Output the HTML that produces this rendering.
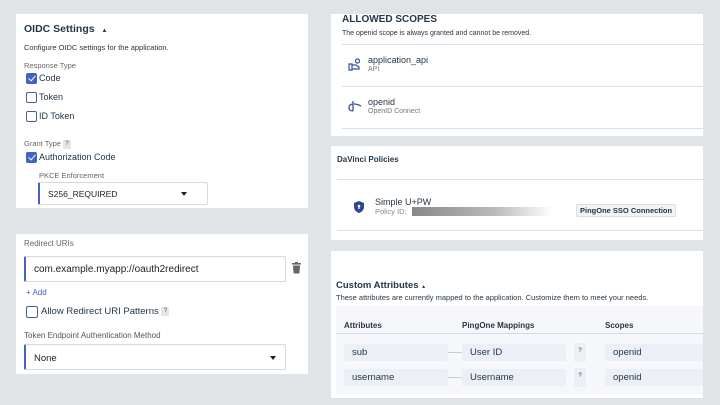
<!DOCTYPE html>
<html><head><style>
*{box-sizing:border-box;margin:0;padding:0}
body{width:720px;height:405px;background:#e1e4e7;font-family:"Liberation Sans",sans-serif;color:#253746;position:relative;overflow:hidden}
.card{position:absolute;background:#fff}
.abs{position:absolute;white-space:nowrap}
.cb{position:absolute;width:11px;height:11px;border:1.5px solid #4a5b9f;border-radius:2px;background:#fff}
.cb.on{background:#4462c4;border-color:#4462c4}
.cb.on:after{content:"";position:absolute;left:2.5px;top:0px;width:3px;height:6px;border:solid #fff;border-width:0 1.6px 1.6px 0;transform:rotate(40deg)}
.q{display:inline-block;width:8px;height:9px;background:#e3e5e8;font-size:6px;text-align:center;line-height:9px;color:#555;border-radius:1px;vertical-align:middle}
.sel{position:absolute;border:1px solid #d5d8dc;border-left:2px solid #4462c4;border-radius:2px;background:#fff}
.caret{position:absolute;width:0;height:0;border-left:3.5px solid transparent;border-right:3.5px solid transparent;border-top:4px solid #222}
.hr{position:absolute;height:1px;background:#dcdfe3}
.pill{position:absolute;background:#eceff6;border-radius:2px;font-size:9.5px;padding-left:8px;line-height:17px;color:#253746}
</style></head><body>
<!-- card 1 -->
<div class="card" style="left:16px;top:14px;width:292px;height:194px">
<div class="abs" style="left:8px;top:9px;font-size:10.5px;font-weight:bold">OIDC Settings <span style="font-size:6px;margin-left:4px">▲</span></div>
<div class="abs" style="left:8px;top:29px;font-size:7.5px">Configure OIDC settings for the application.</div>
<div class="abs" style="left:8px;top:47px;font-size:7.5px;color:#666">Response Type</div>
<div class="cb on" style="left:10px;top:59px"></div><div class="abs" style="left:23px;top:59px;font-size:9px">Code</div>
<div class="cb" style="left:10px;top:78px"></div><div class="abs" style="left:23px;top:78px;font-size:9px">Token</div>
<div class="cb" style="left:10px;top:97px"></div><div class="abs" style="left:23px;top:97px;font-size:9px">ID Token</div>
<div class="abs" style="left:8px;top:125px;font-size:7.5px;color:#666">Grant Type <span class="q">?</span></div>
<div class="cb on" style="left:10px;top:138px"></div><div class="abs" style="left:23px;top:138px;font-size:9px">Authorization Code</div>
<div class="abs" style="left:23px;top:157px;font-size:7.5px;color:#666">PKCE Enforcement</div>
<div class="sel" style="left:22px;top:168px;width:170px;height:23px"><div class="abs" style="left:8px;top:6px;font-size:8.5px;color:#222">S256_REQUIRED</div><div class="caret" style="left:141px;top:9px"></div></div>
</div>
<!-- card 2 -->
<div class="card" style="left:16px;top:234px;width:292px;height:140px">
<div class="abs" style="left:8px;top:5px;font-size:8px;color:#666">Redirect URIs</div>
<div class="sel" style="left:8px;top:22px;width:262px;height:26px"><div class="abs" style="left:8px;top:7px;font-size:10px;color:#222">com.example.myapp://oauth2redirect</div></div>
<svg class="abs" style="left:276px;top:28px" width="9" height="12" viewBox="0 0 9 12"><rect x="0" y="1" width="9" height="1.6" fill="#666"/><rect x="3" y="0" width="3" height="1.5" fill="#666"/><path d="M1 3.5h7l-.6 8H1.6z" fill="#666"/></svg>
<div class="abs" style="left:10px;top:54px;font-size:8px;color:#4462c4">+ Add</div>
<div class="cb" style="left:10px;top:72px;width:12px;height:12px"></div><div class="abs" style="left:25px;top:72px;font-size:9.5px">Allow Redirect URI Patterns <span class="q">?</span></div>
<div class="abs" style="left:8px;top:97px;font-size:8px;color:#555">Token Endpoint Authentication Method</div>
<div class="sel" style="left:8px;top:110px;width:262px;height:26px"><div class="abs" style="left:8px;top:8px;font-size:9.5px;color:#222">None</div><div class="caret" style="left:244px;top:11px"></div></div>
</div>
<!-- right card 1 -->
<div class="card" style="left:331px;top:14px;width:372px;height:122px">
<div class="abs" style="left:11px;top:0px;font-size:10px;font-weight:bold">ALLOWED SCOPES</div>
<div class="abs" style="left:11px;top:16px;font-size:7px">The openid scope is always granted and cannot be removed.</div>
<div class="hr" style="left:11px;top:30px;width:361px"></div>
<svg class="abs" style="left:17px;top:44px" width="14" height="14" viewBox="0 0 14 14" fill="none" stroke="#3a4d9a" stroke-width="1.2"><circle cx="9.5" cy="3" r="2"/><path d="M1 6h3v6H1zM4 7h4l3 2v2H4"/></svg>
<div class="abs" style="left:37px;top:41px;font-size:9px;color:#253746">application_api</div>
<div class="abs" style="left:37px;top:52px;font-size:7px;color:#777">API</div>
<div class="hr" style="left:11px;top:72px;width:361px"></div>
<svg class="abs" style="left:17px;top:86px" width="14" height="12" viewBox="0 0 14 12" fill="none" stroke="#3a4d9a" stroke-width="1.3"><path d="M5 1v10M5 4C2 4 1 6 1 8s2 3 4 3M6 4c3 0 5 1 7 2"/></svg>
<div class="abs" style="left:37px;top:83px;font-size:9px;color:#253746">openid</div>
<div class="abs" style="left:37px;top:94px;font-size:7px;color:#777">OpenID Connect</div>
<div class="hr" style="left:11px;top:114px;width:361px"></div>
</div>
<!-- right card 2 -->
<div class="card" style="left:331px;top:146px;width:372px;height:94px">
<div class="abs" style="left:6px;top:9px;font-size:8px;font-weight:bold">DaVinci Policies</div>
<div class="hr" style="left:6px;top:33px;width:366px"></div>
<svg class="abs" style="left:23px;top:55px" width="10" height="12" viewBox="0 0 10 12"><path d="M5 0L10 2v4c0 3-2.5 5-5 6C2.5 11 0 9 0 6V2z" fill="#2e4596"/><circle cx="5" cy="5" r="1.3" fill="#fff"/><rect x="4.4" y="5" width="1.2" height="3" fill="#fff"/></svg>
<div class="abs" style="left:44px;top:51px;font-size:9px">Simple U+PW</div>
<div class="abs" style="left:44px;top:61px;font-size:7.5px;color:#888">Policy ID:</div>
<div class="abs" style="left:81px;top:61px;width:140px;height:9px;background:linear-gradient(90deg,#888,#bbb 60%,#fff)"></div>
<div class="abs" style="left:245px;top:58px;font-size:7.5px;font-weight:bold;background:#f2f3f4;border:1px solid #ddd;border-radius:2px;padding:1px 3px">PingOne SSO Connection</div>
<div class="hr" style="left:6px;top:84px;width:366px"></div>
</div>
<!-- right card 3 -->
<div class="card" style="left:331px;top:251px;width:372px;height:147px">
<div class="abs" style="left:5px;top:29px;font-size:9.5px;font-weight:bold">Custom Attributes <span style="font-size:5px">▲</span></div>
<div class="abs" style="left:5px;top:42px;font-size:7.5px">These attributes are currently mapped to the application. Customize them to meet your needs.</div>
<div class="abs" style="left:5px;top:55px;width:367px;height:88px;background:#f6f7fa"></div>
<div class="abs" style="left:13px;top:70px;font-size:8px;font-weight:bold">Attributes</div>
<div class="abs" style="left:131px;top:70px;font-size:8px;font-weight:bold">PingOne Mappings</div>
<div class="abs" style="left:274px;top:70px;font-size:8px;font-weight:bold">Scopes</div>
<div class="hr" style="left:5px;top:82px;width:367px;background:#d7dae0"></div>
<div class="pill" style="left:13px;top:93px;width:104px">sub</div>
<div class="abs" style="left:117px;top:101px;width:14px;height:1px;background:#ccc"></div>
<div class="pill" style="left:131px;top:93px;width:104px">User ID</div>
<div class="pill" style="left:243px;top:92px;width:12px;height:19px;padding:0;text-align:center;font-size:6px">?</div>
<div class="pill" style="left:274px;top:93px;width:98px">openid</div>
<div class="pill" style="left:13px;top:118px;width:104px">username</div>
<div class="abs" style="left:117px;top:126px;width:14px;height:1px;background:#ccc"></div>
<div class="pill" style="left:131px;top:118px;width:104px">Username</div>
<div class="pill" style="left:243px;top:117px;width:12px;height:19px;padding:0;text-align:center;font-size:6px">?</div>
<div class="pill" style="left:274px;top:118px;width:98px">openid</div>
</div>
</body></html>
